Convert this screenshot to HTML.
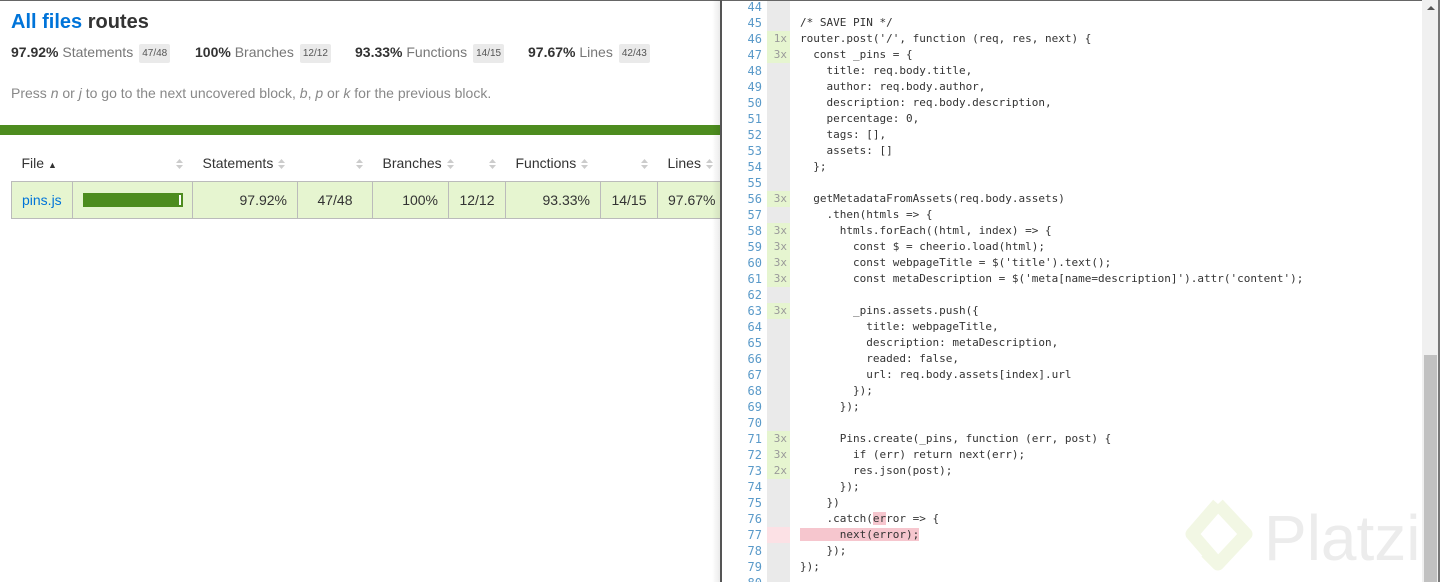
<!DOCTYPE html>
<html><head><meta charset="utf-8"><style>
*{margin:0;padding:0;box-sizing:border-box}
body{width:1440px;height:582px;overflow:hidden;background:#fff;font-family:"Liberation Sans",Arial,sans-serif;color:#333;position:relative}
#left{position:absolute;left:0;top:0;width:720px;height:582px;overflow:hidden;border-top:1px solid #666}
h1{position:absolute;left:11px;top:10px;font-size:20px;font-weight:bold;color:#333}
h1 a{color:#0074d9;text-decoration:none}
.stats{position:absolute;left:11px;top:43px;font-size:14px;white-space:nowrap}
.stat{position:absolute;top:0}
.stat b{color:#333}
.stat span.l{color:#777}
.frac{display:inline-block;background:#eaeaea;color:#555;font-size:10px;padding:4px 3px;border-radius:2px;margin-left:6px;vertical-align:1px}
.press{position:absolute;left:11px;top:84px;font-size:14px;color:#888}
.bar{position:absolute;left:0;top:124px;width:720px;height:10px;background:#4d8c1f}
table{position:absolute;left:11px;top:144px;border-collapse:collapse;font-size:14px;table-layout:fixed;width:760px}
th{font-weight:normal;text-align:left;height:36px;color:#333;padding:0 10px;white-space:nowrap}
.srt{display:inline-block;width:7px;height:10px;margin-left:5px;vertical-align:-1px}
td{height:37px;border:1px solid #bbb;background:#e6f5d0;padding:0 10px;text-align:right;color:#333;white-space:nowrap}
td.c{text-align:center}
td.f{text-align:left;color:#0074d9}
#div{position:absolute;left:712px;top:0;width:8px;height:582px;background:linear-gradient(to right,rgba(0,0,0,0),rgba(0,0,0,0.08))}
#divl{position:absolute;left:720px;top:0;width:2px;height:582px;background:#555}
#right{position:absolute;left:722px;top:0;width:718px;height:582px;border-top:1px solid #666;overflow:hidden}
.ln{position:absolute;left:0;width:40px;text-align:right;color:#5a9ac9;font:12px/16px "DejaVu Sans Mono",monospace}
.cnt{position:absolute;left:45px;width:23px;height:16px;background:#eaeaea;color:#999;font:11px/16px "DejaVu Sans Mono",monospace;text-align:right;padding-right:3px}
.cnt.g{background:#e6f5d0}
.cnt.r{background:#fce1e5}
.code{position:absolute;left:78px;white-space:pre;color:#333;font:11px/16px "DejaVu Sans Mono",monospace}
.hl{background:#f6c6ce}
#sb{position:absolute;left:1422px;top:0;width:16px;height:582px;background:#f0f0f0}
#th{position:absolute;left:1424px;top:355px;width:13px;height:227px;background:#c1c1c1}
#rb{position:absolute;left:1438px;top:0;width:2px;height:582px;background:#777}
.plz{position:absolute;left:1264px;top:498px;font-size:64px;color:#ececec;font-family:"Liberation Sans",sans-serif;line-height:80px}
</style></head><body>
<svg width="0" height="0" style="position:absolute"><defs><g id="s"><path d="M0 4 L3.5 0 L7 4Z M0 6 L3.5 10 L7 6Z" fill="#ccc"/></g></defs></svg>
<div id="left">
<h1><a>All files</a> routes</h1>
<div class="stats">
<div class="stat" style="left:0"><b>97.92%</b> <span class="l">Statements</span><span class="frac">47/48</span></div>
<div class="stat" style="left:184px"><b>100%</b> <span class="l">Branches</span><span class="frac">12/12</span></div>
<div class="stat" style="left:344px"><b>93.33%</b> <span class="l">Functions</span><span class="frac">14/15</span></div>
<div class="stat" style="left:517px"><b>97.67%</b> <span class="l">Lines</span><span class="frac">42/43</span></div>
</div>
<div class="press">Press <i>n</i> or <i>j</i> to go to the next uncovered block, <i>b</i>, <i>p</i> or <i>k</i> for the previous block.</div>
<div class="bar"></div>
<table>
<colgroup><col style="width:61px"><col style="width:120px"><col style="width:105px"><col style="width:75px"><col style="width:76px"><col style="width:57px"><col style="width:95px"><col style="width:57px"><col style="width:114px"></colgroup>
<tr><th>File <span style="font-size:9px">▲</span></th><th style="text-align:right"><svg class="srt"><use href="#s"/></svg></th><th>Statements<svg class="srt"><use href="#s"/></svg></th><th style="text-align:right"><svg class="srt"><use href="#s"/></svg></th><th>Branches<svg class="srt"><use href="#s"/></svg></th><th style="text-align:right"><svg class="srt"><use href="#s"/></svg></th><th>Functions<svg class="srt"><use href="#s"/></svg></th><th style="text-align:right"><svg class="srt"><use href="#s"/></svg></th><th>Lines<svg class="srt"><use href="#s"/></svg></th></tr>
<tr><td class="f">pins.js</td><td style="text-align:left"><div style="width:100px;height:14px;background:#4d8c1f;border:1px solid #4d8c1f;position:relative"><div style="position:absolute;right:1px;top:1px;width:2px;height:10px;background:#fff"></div></div></td><td>97.92%</td><td class="c">47/48</td><td>100%</td><td class="c">12/12</td><td>93.33%</td><td class="c">14/15</td><td style="text-align:left">97.67%</td></tr>
</table>
</div>
<div id="div"></div><div id="divl"></div>
<div id="right"></div>
<div class="plz"><svg width="72" height="84" viewBox="0 0 72 84" style="position:absolute;left:-82px;top:-2px"><path d="M36 8 L64 38 L36 68 L24 56 M36 68 L10 38 L36 8" fill="none" stroke="#f2f7e4" stroke-width="13" stroke-linejoin="round"/></svg>Platzi</div>
<div id="sb"></div><div id="th"></div><div id="rb"></div>
<div style="position:absolute;left:1427px;top:6px;width:0;height:0;border-left:4px solid transparent;border-right:4px solid transparent;border-bottom:4px solid #555"></div>
<script>
var L={44:["",""],45:["","/* SAVE PIN */"],46:["1x","router.post('/', function (req, res, next) {"],47:["3x","  const _pins = {"],48:["","    title: req.body.title,"],49:["","    author: req.body.author,"],50:["","    description: req.body.description,"],51:["","    percentage: 0,"],52:["","    tags: [],"],53:["","    assets: []"],54:["","  };"],55:["",""],56:["3x","  getMetadataFromAssets(req.body.assets)"],57:["","    .then(htmls => {"],58:["3x","      htmls.forEach((html, index) => {"],59:["3x","        const $ = cheerio.load(html);"],60:["3x","        const webpageTitle = $('title').text();"],61:["3x","        const metaDescription = $('meta[name=description]').attr('content');"],62:["",""],63:["3x","        _pins.assets.push({"],64:["","          title: webpageTitle,"],65:["","          description: metaDescription,"],66:["","          readed: false,"],67:["","          url: req.body.assets[index].url"],68:["","        });"],69:["","      });"],70:["",""],71:["3x","      Pins.create(_pins, function (err, post) {"],72:["3x","        if (err) return next(err);"],73:["2x","        res.json(post);"],74:["","      });"],75:["","    })"],76:["","    .catch(<span class=\"hl\">er</span>ror => {"],77:["r","<span class=\"hl\">      next(error);</span>"],78:["","    });"],79:["","});"],80:["",""]};
var R=document.getElementById('right'),h='';
for(var n=44;n<=80;n++){var y=-2+(n-44)*16,c=L[n][0];
h+='<div class="ln" style="top:'+y+'px">'+n+'</div>';
h+='<div class="cnt'+(c=="r"?" r":c?" g":"")+'" style="top:'+y+'px">'+(c=="r"?"":c)+'</div>';
h+='<div class="code" style="top:'+y+'px">'+L[n][1]+'</div>';}
R.innerHTML=h;
</script>
</body></html>
